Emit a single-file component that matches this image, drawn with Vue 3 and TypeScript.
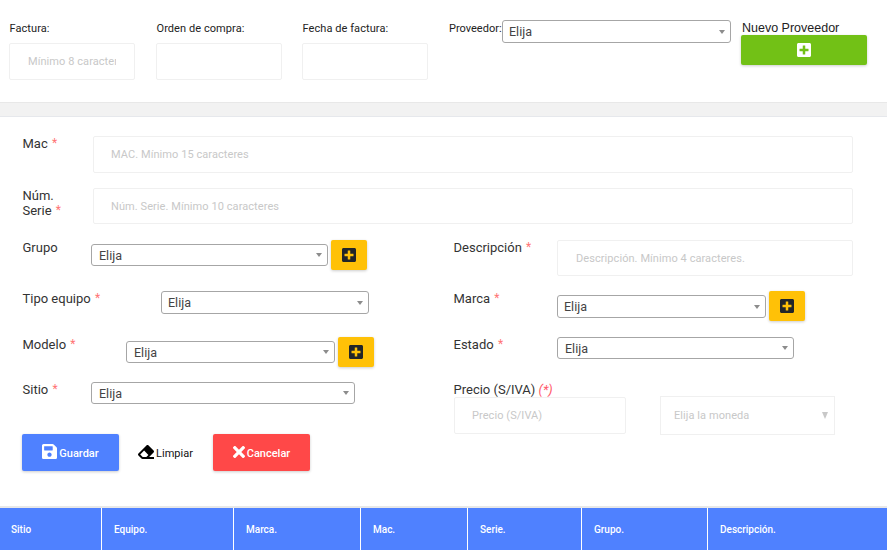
<script setup lang="ts">
const columns = [
  { name: 'Sitio', width: 102 },
  { name: 'Equipo.', width: 132 },
  { name: 'Marca.', width: 127 },
  { name: 'Mac.', width: 107 },
  { name: 'Serie.', width: 114 },
  { name: 'Grupo.', width: 126 },
  { name: 'Descripción.', width: 179 },
]

const plusPath = 'M400 32H48C21.5 32 0 53.5 0 80v352c0 26.5 21.5 48 48 48h352c26.5 0 48-21.5 48-48V80c0-26.5-21.5-48-48-48zm-32 252c0 6.6-5.4 12-12 12h-92v92c0 6.6-5.4 12-12 12h-56c-6.6 0-12-5.4-12-12v-92H92c-6.6 0-12-5.4-12-12v-56c0-6.6 5.4-12 12-12h92v-92c0-6.6 5.4-12 12-12h56c6.6 0 12 5.4 12 12v92h92c6.6 0 12 5.4 12 12v56z'
</script>

<template>
  <div class="page">
    <section class="top">
      <div class="top-field">
        <label>Factura:</label>
        <input class="box first" type="text" placeholder="Mínimo 8 caracteres" />
      </div>
      <div class="top-field">
        <label>Orden de compra:</label>
        <input class="box" type="text" />
      </div>
      <div class="top-field">
        <label>Fecha de factura:</label>
        <input class="box" type="text" />
      </div>
      <div class="proveedor">
        <label>Proveedor:</label>
        <div class="pick w229 tall"><select><option>Elija</option></select></div>
      </div>
      <div class="nuevo">
        <div class="nuevo-title">Nuevo Proveedor</div>
        <button class="btn-green" type="button">
          <svg viewBox="0 0 448 512" width="14" height="16"><path fill="#fff" :d="plusPath" /></svg>
        </button>
      </div>
    </section>

    <div class="band"></div>

    <section class="form">
      <div class="row-full mac">
        <label class="lbl w71">Mac <em>*</em></label>
        <input class="box grow" type="text" placeholder="MAC. Mínimo 15 caracteres" />
      </div>
      <div class="row-full serie">
        <label class="lbl w71">Núm.<br />Serie <em>*</em></label>
        <input class="box grow" type="text" placeholder="Núm. Serie. Mínimo 10 caracteres" />
      </div>

      <div class="cols">
        <div class="col-left">
          <div class="row h51">
            <label class="lbl w69">Grupo</label>
            <div class="pick w237 mt4"><select><option>Elija</option></select></div>
            <button class="btn-add" type="button">
              <svg viewBox="0 0 448 512" width="14" height="16"><path fill="#212529" :d="plusPath" /></svg>
            </button>
          </div>
          <div class="row h46">
            <label class="lbl w139">Tipo equipo <em>*</em></label>
            <div class="pick w208 tall"><select><option>Elija</option></select></div>
          </div>
          <div class="row h45">
            <label class="lbl w104">Modelo <em>*</em></label>
            <div class="pick w209 mt4"><select><option>Elija</option></select></div>
            <button class="btn-add" type="button">
              <svg viewBox="0 0 448 512" width="14" height="16"><path fill="#212529" :d="plusPath" /></svg>
            </button>
          </div>
          <div class="row">
            <label class="lbl w69">Sitio <em>*</em></label>
            <div class="pick w264"><select><option>Elija</option></select></div>
          </div>
        </div>

        <div class="col-right">
          <div class="row h51">
            <label class="lbl w104">Descripción <em>*</em></label>
            <input class="box desc" type="text" placeholder="Descripción. Mínimo 4 caracteres." />
          </div>
          <div class="row h46">
            <label class="lbl w104">Marca <em>*</em></label>
            <div class="pick w209 mt4 tall"><select><option>Elija</option></select></div>
            <button class="btn-add" type="button">
              <svg viewBox="0 0 448 512" width="14" height="16"><path fill="#212529" :d="plusPath" /></svg>
            </button>
          </div>
          <div class="row h45">
            <label class="lbl w104">Estado <em>*</em></label>
            <div class="pick w237"><select><option>Elija</option></select></div>
          </div>
          <label class="lbl">Precio (S/IVA) <em class="slanted">(*)</em></label>
          <div class="precio">
            <input class="box price" type="text" placeholder="Precio (S/IVA)" />
            <div class="moneda">Elija la moneda<span class="moneda-arrow"></span></div>
          </div>
        </div>
      </div>

      <div class="actions">
        <button class="btn btn-blue" type="button">
          <svg viewBox="0 32 448 448" width="15" height="15"><path fill="#fff" d="M433.941 129.941l-83.882-83.882A48 48 0 0 0 316.118 32H48C21.49 32 0 53.49 0 80v352c0 26.51 21.49 48 48 48h352c26.51 0 48-21.49 48-48V163.882a48 48 0 0 0-14.059-33.941zM224 416c-35.346 0-64-28.654-64-64 0-35.346 28.654-64 64-64s64 28.654 64 64c0 35.346-28.654 64-64 64zm96-304.52V212c0 6.627-5.373 12-12 12H76c-6.627 0-12-5.373-12-12V108c0-6.627 5.373-12 12-12h228.52c3.183 0 6.235 1.264 8.485 3.515l3.48 3.48A11.996 11.996 0 0 1 320 111.48z" /></svg>
          <span>Guardar</span>
        </button>
        <button class="btn btn-plain" type="button">
          <svg viewBox="0 0 512 512" width="16" height="16"><path fill="#000" d="M497.941 273.941c18.745-18.745 18.745-49.137 0-67.882l-160-160c-18.745-18.745-49.137-18.745-67.882 0l-256 256c-18.745 18.745-18.745 49.137 0 67.882l96 96A48.004 48.004 0 0 0 144 480h356c6.627 0 12-5.373 12-12v-40c0-6.627-5.373-12-12-12H355.883l142.058-142.059zm-302.627-62.627l137.373 137.373L265.373 416H150.628l-80-80 124.686-124.686z" /></svg>
          <span>Limpiar</span>
        </button>
        <button class="btn btn-red" type="button">
          <svg viewBox="0 80 352 352" width="12" height="12"><path fill="#fff" d="M242.72 256l100.07-100.07c12.28-12.28 12.28-32.19 0-44.48l-22.24-22.24c-12.28-12.28-32.19-12.28-44.48 0L176 189.28 75.93 89.21c-12.28-12.28-32.19-12.28-44.48 0L9.21 111.45c-12.28 12.28-12.28 32.19 0 44.48L109.28 256 9.21 356.07c-12.28 12.28-12.28 32.19 0 44.48l22.24 22.24c12.28 12.28 32.2 12.28 44.48 0L176 322.72l100.07 100.07c12.28 12.28 32.2 12.28 44.48 0l22.24-22.24c12.28-12.28 12.28-32.19 0-44.48L242.72 256z" /></svg>
          <span>Cancelar</span>
        </button>
      </div>
    </section>

    <div class="table-head">
      <div v-for="col in columns" :key="col.name" class="th" :style="{ width: col.width + 'px' }">{{ col.name }}</div>
    </div>
  </div>
</template>

<style scoped>
.page {
  width: 887px;
  height: 550px;
  overflow: hidden;
  background: #fff;
  font-family: Roboto, "Liberation Sans", sans-serif;
  color: #212529;
}

.top {
  height: 102px;
  display: flex;
  align-items: flex-start;
  box-sizing: border-box;
  padding: 20px 0 0 9px;
}

.top-field {
  width: 126px;
  margin-right: 21px;
  padding-top: 2px;
}

.top-field:nth-child(2) {
  margin-right: 20px;
}

.top-field label {
  display: block;
  height: 21px;
  margin-left: .5px;
  font-size: 11px;
  letter-spacing: .07px;
  line-height: 13px;
  color: #222;
}

.box {
  display: block;
  box-sizing: border-box;
  height: 37px;
  border: 1px solid #f0f0f0;
  border-radius: 2px;
  padding: 0 17px;
  font-family: inherit;
  font-size: 11px;
  letter-spacing: .07px;
  color: #333;
  background: #fff;
  outline: none;
}

.box.first,
.box.desc {
  padding: 0 18px;
}

.top-field .box {
  width: 126px;
}

.box::placeholder {
  color: #c8c8c8;
  opacity: 1;
}

.proveedor {
  display: flex;
  align-items: flex-start;
  margin-left: 0;
  width: 292px;
}

.proveedor label {
  width: 53px;
  font-size: 11px;
  line-height: 13px;
  padding-top: 2px;
  color: #222;
}

.nuevo {
  padding-top: 1px;
}

.nuevo-title {
  height: 14px;
  margin-left: 1px;
  font-family: "Liberation Sans", Arial, sans-serif;
  font-size: 12.5px;
  line-height: 14px;
  color: #222;
}

.btn-green {
  display: flex;
  align-items: center;
  justify-content: center;
  width: 126px;
  height: 30px;
  border: 0;
  border-radius: 2px;
  background: #72c116;
  box-shadow: 0 1px 3px rgba(0, 0, 0, .2);
}

.band {
  height: 13px;
  background: #f2f2f2;
  border-top: 1px solid #e8e8e8;
  border-bottom: 1px solid #e6e8ec;
}

.form {
  height: 389px;
  box-sizing: border-box;
  padding: 19px 34px 0 22px;
}

.row-full {
  display: flex;
  align-items: flex-start;
}

.serie {
  margin-top: 15px;
}

.serie .box {
  height: 36px;
}

.grow {
  flex: 1;
  min-width: 0;
}

.lbl {
  display: block;
  flex: none;
  box-sizing: border-box;
  padding-left: .5px;
  font-size: 13px;
  line-height: 15px;
  color: #333;
}

.lbl em {
  position: relative;
  top: -1px;
  font-style: normal;
  font-size: 12px;
  color: #ff7474;
  margin-left: 1px;
}

.lbl em.slanted {
  top: 0;
  font-style: italic;
  font-size: 13px;
  color: #ff5a6a;
  margin-left: 0;
}

.w69 { width: 69px; }
.w71 { width: 71px; }
.w104 { width: 104px; }
.w139 { width: 139px; }

.cols {
  display: flex;
  margin-top: 16px;
  height: 194px;
}

.col-left {
  width: 431px;
  flex: none;
}

.col-right {
  flex: 1;
}

.row {
  display: flex;
  align-items: flex-start;
}

.h51 { height: 51px; }
.h46 { height: 46px; }
.h45 { height: 45px; }

.pick {
  position: relative;
  flex: none;
  height: 22px;
}

.pick.tall {
  height: 23px;
}

.pick select {
  display: block;
  width: 100%;
  height: 100%;
  box-sizing: border-box;
  appearance: none;
  background: #fff;
  border: 1px solid #a6a6a6;
  border-radius: 3px;
  padding: 0 0 0 7px;
  font-family: inherit;
  font-size: 12.5px;
  color: #444;
  outline: none;
}

.pick.tall select {
  padding-left: 6px;
}

.pick::after {
  content: "";
  position: absolute;
  right: 6px;
  top: 50%;
  margin-top: -2px;
  border-left: 3px solid transparent;
  border-right: 3px solid transparent;
  border-top: 4px solid #8c8c8c;
  pointer-events: none;
}

.w208 { width: 208px; }
.w209 { width: 209px; }
.w229 { width: 229px; }
.w237 { width: 237px; }
.w264 { width: 264px; }
.mt4 { margin-top: 4px; }

.btn-add {
  display: flex;
  align-items: center;
  justify-content: center;
  flex: none;
  width: 36px;
  height: 30px;
  margin-left: 3px;
  border: 0;
  border-radius: 2px;
  background: #ffc107;
  box-shadow: 0 1px 3px rgba(0, 0, 0, .2);
}

.desc {
  width: 296px;
  height: 36px;
}

.precio {
  display: flex;
  align-items: center;
  height: 37px;
  margin-left: 1px;
}

.price {
  width: 172px;
}

.moneda {
  position: relative;
  box-sizing: border-box;
  width: 175px;
  height: 39px;
  margin-left: 34px;
  flex: none;
  padding-left: 13px;
  border: 1px solid #f0f0f0;
  font-size: 11px;
  letter-spacing: .07px;
  line-height: 37px;
  color: #c8c8c8;
}

.moneda-arrow {
  position: absolute;
  right: 6px;
  top: 15px;
  border-left: 3px solid transparent;
  border-right: 3px solid transparent;
  border-top: 7px solid #c8c8c8;
}

.actions {
  display: flex;
  margin-top: 0;
}

.btn {
  display: flex;
  align-items: center;
  justify-content: center;
  gap: 2px;
  box-sizing: border-box;
  height: 37px;
  border: 0;
  border-radius: 2px;
  padding: 0;
  font-family: inherit;
  font-size: 11px;
  font-weight: 500;
  color: #fff;
}

.btn span {
  position: relative;
  top: 1px;
}

.btn svg {
  position: relative;
  top: -1px;
}

.btn-blue {
  width: 97px;
  background: #4f81ff;
  box-shadow: 0 1px 3px rgba(0, 0, 0, .2);
}

.btn-plain {
  width: 57px;
  margin: 0 19px 0 18px;
  background: transparent;
  color: #111;
  font-weight: 400;
}

.btn-red {
  width: 97px;
  background: #ff4848;
  box-shadow: 0 1px 3px rgba(0, 0, 0, .2);
}

.table-head {
  display: flex;
  height: 45px;
  box-sizing: border-box;
  border-top: 2px solid #e8e8e8;
  background: #4f81ff;
}

.th {
  flex: none;
  box-sizing: border-box;
  padding-left: 12px;
  border-right: 1px solid #fff;
  font-size: 10px;
  font-weight: 500;
  line-height: 44px;
  color: #fff;
}

.th:first-child {
  padding-left: 11px;
}

.th:last-child {
  border-right: 0;
}
</style>

<style>
html, body {
  margin: 0;
  overflow: hidden;
}
</style>
